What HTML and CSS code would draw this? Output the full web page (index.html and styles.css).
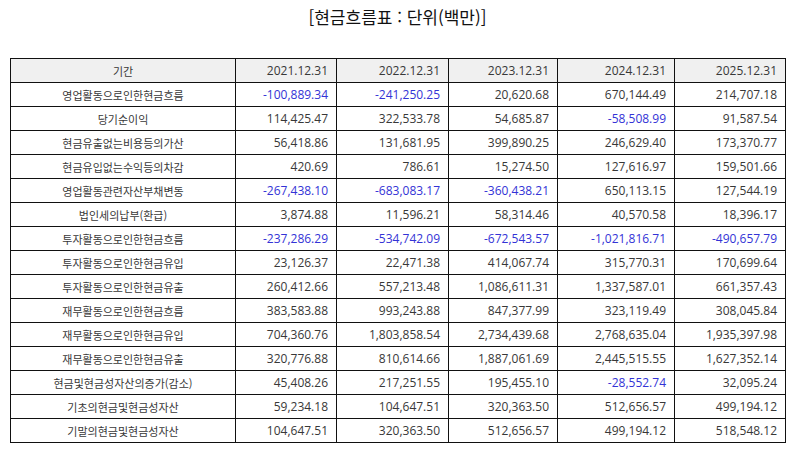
FILE: index.html
```html
<!DOCTYPE html>
<html lang="ko">
<head>
<meta charset="utf-8">
<link rel="stylesheet" href="styles.css">
</head>
<body>
<div class="page">
  <h1 class="title">[현금흐름표 : 단위(백만)]</h1>
  <table class="cf">
    <colgroup>
      <col class="c0"><col class="c1"><col class="c2"><col class="c3"><col class="c4"><col class="c5">
    </colgroup>
    <thead>
      <tr><th class="lbl">기간</th><th>2021.12.31</th><th>2022.12.31</th><th>2023.12.31</th><th>2024.12.31</th><th>2025.12.31</th></tr>
    </thead>
    <tbody>
      <tr><td class="lbl">영업활동으로인한현금흐름</td><td class="neg">-100,889.34</td><td class="neg">-241,250.25</td><td>20,620.68</td><td>670,144.49</td><td>214,707.18</td></tr>
      <tr><td class="lbl">당기순이익</td><td>114,425.47</td><td>322,533.78</td><td>54,685.87</td><td class="neg">-58,508.99</td><td>91,587.54</td></tr>
      <tr><td class="lbl">현금유출없는비용등의가산</td><td>56,418.86</td><td>131,681.95</td><td>399,890.25</td><td>246,629.40</td><td>173,370.77</td></tr>
      <tr><td class="lbl">현금유입없는수익등의차감</td><td>420.69</td><td>786.61</td><td>15,274.50</td><td>127,616.97</td><td>159,501.66</td></tr>
      <tr><td class="lbl">영업활동관련자산부채변동</td><td class="neg">-267,438.10</td><td class="neg">-683,083.17</td><td class="neg">-360,438.21</td><td>650,113.15</td><td>127,544.19</td></tr>
      <tr><td class="lbl">법인세의납부(환급)</td><td>3,874.88</td><td>11,596.21</td><td>58,314.46</td><td>40,570.58</td><td>18,396.17</td></tr>
      <tr><td class="lbl">투자활동으로인한현금흐름</td><td class="neg">-237,286.29</td><td class="neg">-534,742.09</td><td class="neg">-672,543.57</td><td class="neg">-1,021,816.71</td><td class="neg">-490,657.79</td></tr>
      <tr><td class="lbl">투자활동으로인한현금유입</td><td>23,126.37</td><td>22,471.38</td><td>414,067.74</td><td>315,770.31</td><td>170,699.64</td></tr>
      <tr><td class="lbl">투자활동으로인한현금유출</td><td>260,412.66</td><td>557,213.48</td><td>1,086,611.31</td><td>1,337,587.01</td><td>661,357.43</td></tr>
      <tr><td class="lbl">재무활동으로인한현금흐름</td><td>383,583.88</td><td>993,243.88</td><td>847,377.99</td><td>323,119.49</td><td>308,045.84</td></tr>
      <tr><td class="lbl">재무활동으로인한현금유입</td><td>704,360.76</td><td>1,803,858.54</td><td>2,734,439.68</td><td>2,768,635.04</td><td>1,935,397.98</td></tr>
      <tr><td class="lbl">재무활동으로인한현금유출</td><td>320,776.88</td><td>810,614.66</td><td>1,887,061.69</td><td>2,445,515.55</td><td>1,627,352.14</td></tr>
      <tr><td class="lbl">현금및현금성자산의증가(감소)</td><td>45,408.26</td><td>217,251.55</td><td>195,455.10</td><td class="neg">-28,552.74</td><td>32,095.24</td></tr>
      <tr><td class="lbl">기초의현금및현금성자산</td><td>59,234.18</td><td>104,647.51</td><td>320,363.50</td><td>512,656.57</td><td>499,194.12</td></tr>
      <tr><td class="lbl">기말의현금및현금성자산</td><td>104,647.51</td><td>320,363.50</td><td>512,656.57</td><td>499,194.12</td><td>518,548.12</td></tr>
    </tbody>
  </table>
</div>
</body>
</html>
```

FILE: styles.css
```css
html, body {
  margin: 0;
  padding: 0;
  background: #ffffff;
}
body {
  font-family: "Noto Sans CJK KR", "Noto Sans", sans-serif;
  color: #222222;
}
.page {
  padding: 0 9px 0 10px;
}
.title {
  margin: 0;
  height: 58px;
  padding-top: 3px;
  box-sizing: border-box;
  text-align: center;
  font-size: 17px;
  font-weight: 400;
  line-height: 28px;
  color: #111111;
}
.cf {
  width: 775px;
  border-collapse: collapse;
  table-layout: fixed;
  font-size: 12px;
}
.c0 { width: 225px; }
.c1 { width: 101px; }
.c2 { width: 112px; }
.c3 { width: 109px; }
.c4 { width: 117px; }
.c5 { width: 111px; }
.cf th, .cf td {
  border: 1px solid #111111;
  height: 24px;
  padding: 0 8px 0 4px;
  box-sizing: border-box;
  text-align: right;
  font-weight: 400;
  line-height: 22px;
  white-space: nowrap;
  color: #383838;
  font-family: "Open Sans", "Noto Sans", sans-serif;
}
.cf th {
  background: #f0f0f0;
}
.cf .lbl {
  text-align: center;
  padding: 0 4px;
  font-family: "Noto Sans CJK KR", "Noto Sans", sans-serif;
  font-size: 11px;
}
.cf .neg {
  color: #3333d6;
}
```
